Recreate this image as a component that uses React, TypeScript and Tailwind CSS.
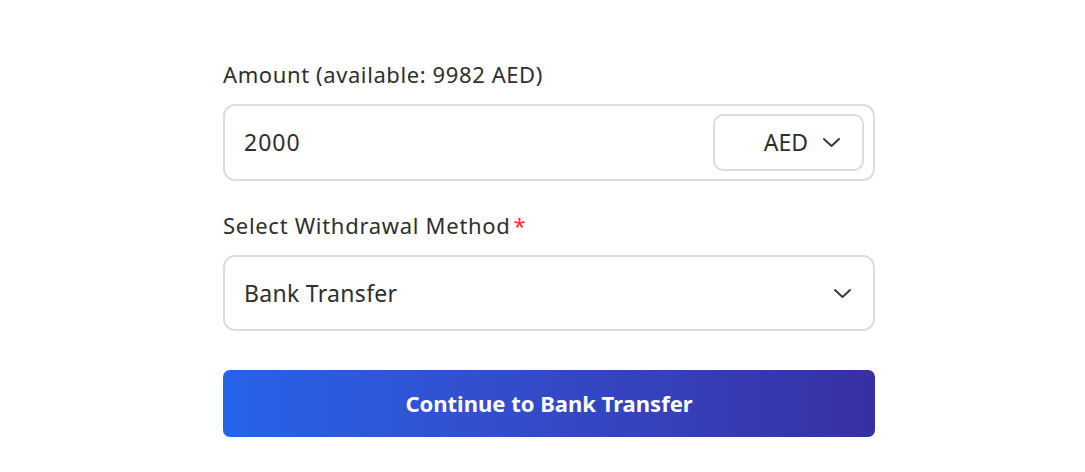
function Chevron() {
  return (
    <svg width="19" height="11" viewBox="0 0 19 11" fill="none" className="text-[#3a3a3a]">
      <polyline
        points="2,2 9.5,9 17,2"
        stroke="currentColor"
        strokeWidth="2"
        strokeLinecap="round"
        strokeLinejoin="round"
      />
    </svg>
  );
}

export default function App() {
  return (
    <div
      className="min-h-[472px] bg-white pl-[13px] pt-[60px]"
      style={{ fontFamily: '"Noto Sans", "Open Sans", sans-serif' }}
    >
      <div className="mx-auto w-[652px]">
        <label className="block text-[22px] leading-[28px] tracking-[0.6px] text-[#2f2f2f]">
          Amount (available: 9982 AED)
        </label>
        <div className="mt-[16px] flex h-[77px] items-center rounded-[12px] border-2 border-[#dcdcdc] bg-white pl-[19px] pr-[9px]">
          <input
            className="min-w-0 flex-1 bg-transparent text-[23px] tracking-[1px] text-[#2f2f2f] outline-none"
            defaultValue="2000"
          />
          <button className="flex h-[57px] w-[151px] items-center justify-end gap-[14px] rounded-[10px] border-2 border-[#dcdcdc] pr-[21px] text-[23px] text-[#2f2f2f]">
            AED
            <Chevron />
          </button>
        </div>

        <label className="mt-[30px] block text-[22px] leading-[28px] tracking-[0.7px] text-[#2f2f2f]">
          Select Withdrawal Method<span className="ml-[3px] text-red-500">*</span>
        </label>
        <div className="mt-[16px] flex h-[76px] items-center justify-between rounded-[12px] border-2 border-[#dcdcdc] bg-white pl-[19px] pr-[21px]">
          <span className="text-[23px] tracking-[0.3px] text-[#2f2f2f]">Bank Transfer</span>
          <Chevron />
        </div>

        <button className="mt-[39px] flex h-[67px] w-full items-center justify-center rounded-[7px] bg-gradient-to-r from-[#2563eb] to-[#3730a3] text-[22px] font-bold text-white">
          Continue to Bank Transfer
        </button>
      </div>
    </div>
  );
}
